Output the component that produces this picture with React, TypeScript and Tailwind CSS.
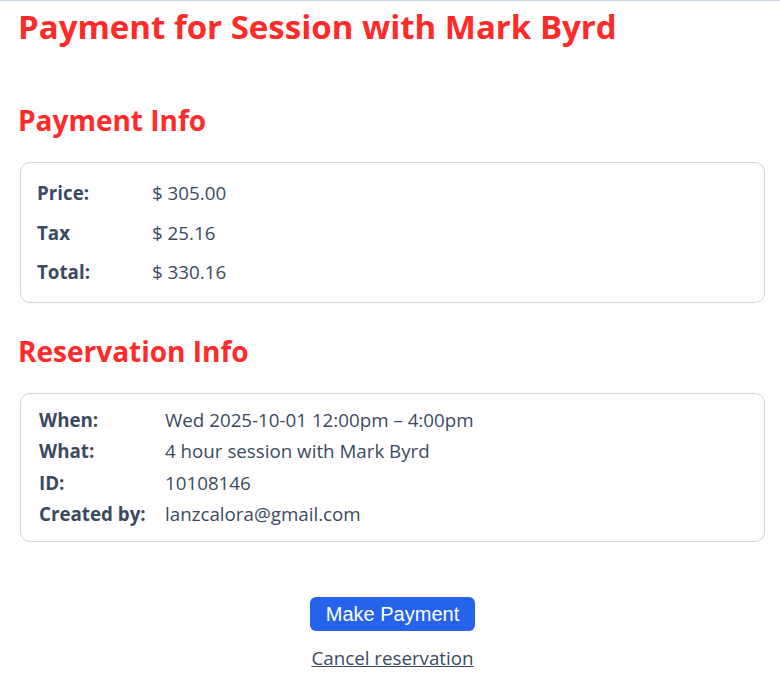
const payment = [
  { label: "Price:", value: "$ 305.00" },
  { label: "Tax", value: "$ 25.16" },
  { label: "Total:", value: "$ 330.16" },
];

const reservation = [
  { label: "When:", value: "Wed 2025-10-01 12:00pm \u2013 4:00pm" },
  { label: "What:", value: "4 hour session with Mark Byrd" },
  { label: "ID:", value: "10108146" },
  { label: "Created by:", value: "lanzcalora@gmail.com" },
];

export default function App() {
  return (
    <main className="min-h-screen bg-white border-t border-slate-300 font-['Open_Sans',sans-serif] text-[#3b4a60]">
      <div className="pl-5 pr-[15px] pt-1.5 pb-6">
        <h1 className="text-[33px] leading-10 font-bold text-[#ff2a2a] -ml-0.5">
          Payment for Session with Mark Byrd
        </h1>

        <h2 className="mt-[55px] text-[28px] leading-9 font-bold text-[#ff2a2a] -ml-0.5">Payment Info</h2>
        <div className="mt-6 rounded-[10px] border border-slate-300 px-4 py-2.5">
          {payment.map((row) => (
            <div key={row.label} className="grid grid-cols-[115px_1fr] py-1 text-[18.75px] leading-[31.5px]">
              <span className="font-bold">{row.label}</span>
              <span>{row.value}</span>
            </div>
          ))}
        </div>

        <h2 className="mt-[30px] text-[28px] leading-9 font-bold text-[#ff2a2a] -ml-0.5">Reservation Info</h2>
        <div className="mt-6 rounded-[10px] border border-slate-300 px-[18px] pt-2.5 pb-[11px]">
          {reservation.map((row) => (
            <div key={row.label} className="grid grid-cols-[126px_1fr] text-[18.75px] leading-[31.5px]">
              <span className="font-bold">{row.label}</span>
              <span>{row.value}</span>
            </div>
          ))}
        </div>

        <div className="mt-[55px] flex flex-col items-center">
          <button className="rounded-md bg-[#2563eb] px-4 py-[3px] font-['Liberation_Sans',Arial,sans-serif] text-xl leading-7 text-white">
            Make Payment
          </button>
          <a href="#" className="mt-[11px] text-[18.75px] leading-[31.5px] underline">
            Cancel reservation
          </a>
        </div>
      </div>
    </main>
  );
}
